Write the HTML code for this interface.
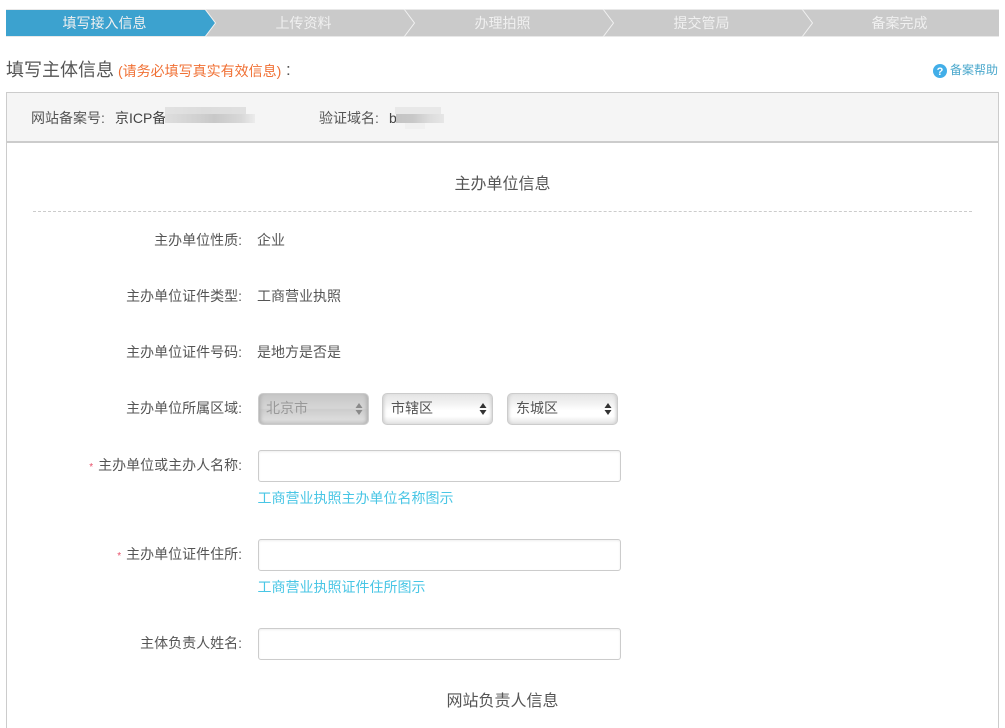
<!DOCTYPE html>
<html lang="zh"><head><meta charset="utf-8"><style>
html,body{margin:0;padding:0;background:#fff;width:1005px;height:728px;overflow:hidden}
#w{width:1005px;height:728px;position:relative;overflow:hidden;font-family:"Liberation Sans","Noto Sans CJK SC",sans-serif;font-size:14px;color:#555}
.a{position:absolute;white-space:nowrap}
.l{position:absolute;right:763px;white-space:nowrap;line-height:20px;color:#555}
.v{position:absolute;left:257px;line-height:20px;white-space:nowrap;color:#555}
.st{position:absolute;top:10px;height:26px;line-height:26px;color:#f0f0f0;text-align:center;white-space:nowrap}
.sel{position:absolute;top:393px;height:30px;width:109px;border:1px solid #ccc;border-radius:5px;line-height:28px;box-sizing:content-box;background:linear-gradient(#e4e4e4,#f4f4f4 35%,#fff 55%,#fff 75%,#e2e2e2);box-shadow:inset 3px 0 3px -2px #ccc,inset -3px 0 3px -2px #ccc;color:#555}
.sel span{position:absolute;left:8px;top:0}
.sel svg{position:absolute;right:5px;top:8px}
.inp{position:absolute;left:258px;width:361px;height:30px;border:1px solid #ccc;border-radius:3px;background:#fff;box-shadow:inset 0 1px 2px #eee}
.lk{position:absolute;left:257.500px;color:#49c6e5;line-height:20px;white-space:nowrap}
.b{position:absolute}
</style></head><body><div id="w">
<svg class="a" style="left:0;top:0" width="1005" height="40">
<rect x="6" y="9" width="993" height="28" fill="#e8e8e8"/>
<rect x="6" y="10" width="993" height="26" fill="#cacaca"/>
<polygon points="6,10 205,10 215.500,23 205,36 6,36" fill="#3ca2cf"/>
<g fill="none" stroke="#f2f2f2" stroke-width="1">
<polyline points="205,9 215.500,23 205,37"/><polyline points="404,9 414.500,23 404,37"/><polyline points="603,9 613.500,23 603,37"/><polyline points="802,9 812.500,23 802,37"/></g></svg>
<div class="st" style="left:5px;width:199px">填写接入信息</div>
<div class="st" style="left:204px;width:199px">上传资料</div>
<div class="st" style="left:403px;width:199px">办理拍照</div>
<div class="st" style="left:602px;width:199px">提交管局</div>
<div class="st" style="left:801px;width:197px">备案完成</div>

<div class="a" style="left:6px;top:58px;font-size:18px;line-height:24px;color:#555">填写主体信息</div>
<div class="a" style="left:118px;top:61px;font-size:14px;line-height:20px;color:#f07034">(请务必填写真实有效信息)</div>
<div class="a" style="left:286px;top:60px;font-size:17px;line-height:20px;color:#555">:</div>
<svg class="a" style="left:933px;top:64px" width="14" height="14"><circle cx="7" cy="7" r="7" fill="#42aee8"/><text x="7" y="11" text-anchor="middle" font-family="Liberation Sans" font-size="11" font-weight="bold" fill="#fff">?</text></svg>
<div class="a" style="left:950px;top:60px;font-size:12px;line-height:20px;color:#4ba8cc">备案帮助</div>

<div class="b" style="left:6px;top:92px;width:991px;height:636px;border:1px solid #ccc;border-bottom:0"></div>
<div class="b" style="left:7px;top:93px;width:991px;height:48px;background:#f5f5f5;border-bottom:2px solid #ccc"></div>
<div class="a" style="left:31px;top:108px;line-height:20px">网站备案号:</div>
<div class="a" style="left:115px;top:108px;line-height:20px;color:#444">京ICP备</div>
<div class="b" style="left:165px;top:107px;width:81px;height:10px;background:linear-gradient(90deg,#e2e2e2,#dcdcdc 50%,#e0e0e0)"></div>
<div class="b" style="left:165px;top:114px;width:90px;height:9px;background:linear-gradient(90deg,#dedede,#cfcfcf 40%,#c8c8c8 55%,#d8d8d8 85%,#ececec)"></div>
<div class="a" style="left:319px;top:108px;line-height:20px">验证域名:</div>
<div class="a" style="left:389px;top:108px;line-height:20px;color:#444">b</div>
<div class="b" style="left:395px;top:107px;width:46px;height:7px;background:#e8e8e8"></div>
<div class="b" style="left:396px;top:114px;width:48px;height:9px;background:linear-gradient(90deg,#c4c4c4,#c8c8c8 35%,#dcdcdc 70%,#e6e6e6)"></div>
<div class="b" style="left:405px;top:123px;width:20px;height:6px;background:#f0f0f0"></div>

<div class="a" style="left:7px;width:991px;top:174px;text-align:center;font-size:16px;line-height:22px;color:#555">主办单位信息</div>
<div class="b" style="left:33px;top:211px;width:939px;border-top:1px dashed #ccc"></div>

<div class="l" style="top:230px">主办单位性质:</div><div class="v" style="top:230px">企业</div>
<div class="l" style="top:286px">主办单位证件类型:</div><div class="v" style="top:286px">工商营业执照</div>
<div class="l" style="top:342px">主办单位证件号码:</div><div class="v" style="top:342px">是地方是否是</div>
<div class="l" style="top:398px">主办单位所属区域:</div>

<div class="sel" style="left:258px;background:linear-gradient(#c6c6c6,#d6d6d6 48%,#cdcdcd 52%,#dcdcdc 85%,#c8c8c8);color:#999;box-shadow:inset 4px 0 3px -2px #b4b4b4,inset -4px 0 3px -2px #b4b4b4"><span style="left:7px">北京市</span><svg width="8" height="14"><path d="M4 1L7.500 6H.5zM4 13L.5 8H7.500z" fill="#8a8a8a"/></svg></div>
<div class="sel" style="left:382px"><span>市辖区</span><svg width="8" height="14"><path d="M4 1L7.500 6H.5zM4 13L.5 8H7.500z" fill="#333"/></svg></div>
<div class="sel" style="left:507px"><span>东城区</span><svg width="8" height="14"><path d="M4 1L7.500 6H.5zM4 13L.5 8H7.500z" fill="#333"/></svg></div>

<div class="l" style="top:455px"><span style="color:#e8506a;font-size:10px;margin-right:5px">*</span>主办单位或主办人名称:</div>
<div class="inp" style="top:450px"></div>
<div class="lk" style="top:488px">工商营业执照主办单位名称图示</div>

<div class="l" style="top:544px"><span style="color:#e8506a;font-size:10px;margin-right:5px">*</span>主办单位证件住所:</div>
<div class="inp" style="top:539px"></div>
<div class="lk" style="top:577px">工商营业执照证件住所图示</div>

<div class="l" style="top:633px">主体负责人姓名:</div>
<div class="inp" style="top:628px"></div>

<div class="a" style="left:7px;width:991px;top:691px;text-align:center;font-size:16px;line-height:22px;color:#555">网站负责人信息</div>
</div></body></html>
